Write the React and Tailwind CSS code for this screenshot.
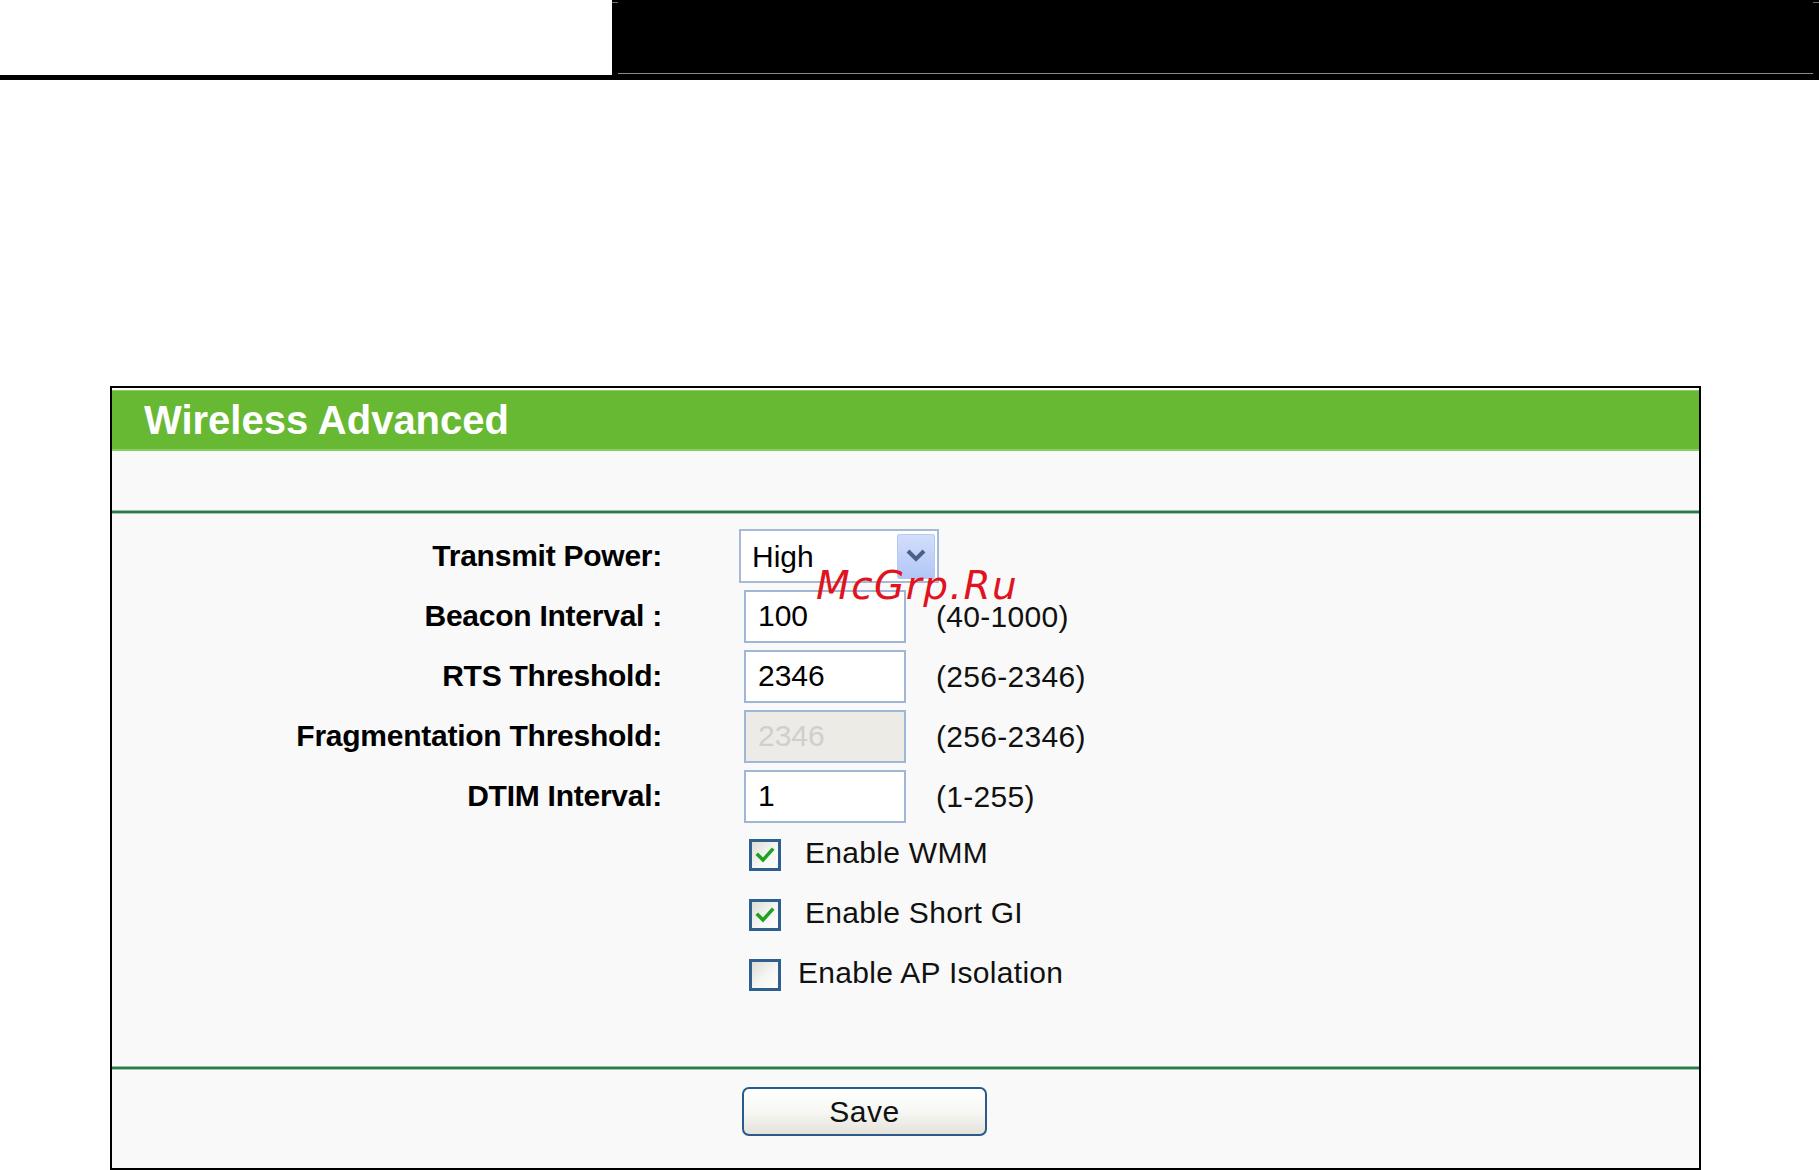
import React from 'react';

const font = "font-['Liberation_Sans',Arial,sans-serif]";

const Label = ({ children }) => (
  <div className="text-right text-[30px] font-bold text-black leading-none tracking-[-0.25px]">{children}</div>
);

const TextRow = ({ label, value, range, disabled }) => (
  <div className="grid grid-cols-[550px_1fr] gap-x-[77px] items-center h-[60px]">
    <Label>{label}</Label>
    <div className="flex items-center">
      <input
        readOnly
        disabled={disabled}
        defaultValue={value}
        className={
          'ml-[5px] w-[162px] h-[53px] border-2 border-[#9fb7d4] pl-[12px] text-[30px] outline-none ' +
          (disabled ? 'bg-[#ecebe5] text-[#cfcfcf]' : 'bg-white text-black')
        }
      />
      <span className="ml-[30px] text-[30px] text-[#111] tracking-[0.3px]">{range}</span>
    </div>
  </div>
);

const CheckRow = ({ label, checked, gap }) => (
  <div className="grid grid-cols-[550px_1fr] gap-x-[77px] items-center h-[60px]">
    <div />
    <div className="flex items-center">
      <div className="ml-[10px] w-[32px] h-[32px] border-[3px] border-[#2f5f8e] bg-gradient-to-br from-[#dcdcd6] via-[#f4f4f1] to-white flex items-center justify-center">
        {checked && (
          <svg width="20" height="18" viewBox="0 0 20 18">
            <path d="M3 9 L8 14 L17 4" fill="none" stroke="#21a121" strokeWidth="3.6" strokeLinecap="square" />
          </svg>
        )}
      </div>
      <span className={(gap ? gap : 'ml-[24px]') + ' mb-[5px] text-[30px] text-[#111] tracking-[0.3px]'}>{label}</span>
    </div>
  </div>
);

export default function App() {
  return (
    <div className={'relative w-[1819px] h-[1170px] bg-white overflow-hidden ' + font}>
      {/* top bar */}
      <div className="flex h-[75px]">
        <div className="w-[612px] bg-white" />
        <div className="flex-1 bg-black flex flex-col justify-between">
          <div className="flex justify-between pt-[2px]">
            <div className="w-[6px] h-px bg-gray-500" />
            <div className="w-[6px] h-px bg-gray-500" />
          </div>
          <div className="h-px bg-[#8a8a8a] mx-[6px] mb-px" />
        </div>
      </div>
      <div className="h-[5px] bg-black" />

      {/* panel */}
      <div className="mt-[306px] ml-[110px] w-[1591px] h-[784px] border-2 border-black bg-[#f9f9f9] flex flex-col">
        <div className="bg-white pt-[2px]">
          <div className="h-[61px] bg-[#67b833] border-t border-[#8ccc66] border-b-2 border-b-[#86cf5e] flex items-center pl-[32px]">
            <span className="text-[40px] font-bold text-white">Wireless Advanced</span>
          </div>
        </div>
        <div className="h-[59px] bg-[#f9f9f9]" />
        <div className="h-[4px] bg-[#2b7a4b] border-t border-[#8fc1a2] border-b border-b-[#9cc7ad]" />

        <div className="h-[552px] pt-[12px]">
          <div className="grid grid-cols-[550px_1fr] gap-x-[77px] items-center h-[60px]">
            <Label>Transmit Power:</Label>
            <div className="flex items-center">
              <div className="w-[200px] h-[54px] border-2 border-[#a4bad6] bg-white flex items-center justify-between pl-[11px] pr-[2px]">
                <span className="text-[30px] text-black">High</span>
                <div className="w-[38px] h-[45px] rounded-[2px] border border-[#b7c9f2] bg-gradient-to-b from-[#d2defc] to-[#b1c6f6] flex items-center justify-center">
                  <svg width="22" height="16" viewBox="0 0 22 16">
                    <path d="M3 3 L11 11 L19 3" fill="none" stroke="#4c5f86" strokeWidth="4" />
                  </svg>
                </div>
              </div>
            </div>
          </div>
          <TextRow label="Beacon Interval :" value="100" range="(40-1000)" />
          <TextRow label="RTS Threshold:" value="2346" range="(256-2346)" />
          <TextRow label="Fragmentation Threshold:" value="2346" range="(256-2346)" disabled />
          <TextRow label="DTIM Interval:" value="1" range="(1-255)" />
          <div className="-mt-[1px]">
            <CheckRow label="Enable WMM" checked />
            <CheckRow label="Enable Short GI" checked />
            <CheckRow label="Enable AP Isolation" gap="ml-[17px]" />
          </div>
        </div>

        <div className="h-[4px] bg-[#2b7a4b] border-t border-[#8fc1a2] border-b border-b-[#9cc7ad]" />
        <div className="flex-1 pt-[17px] grid grid-cols-[550px_1fr] gap-x-[77px] items-start">
          <div />
          <button className="ml-[3px] w-[245px] h-[49px] rounded-[7px] border-2 border-[#2a5a8c] bg-gradient-to-b from-white via-[#f7f7f4] to-[#e4e2d9] text-[30px] text-[#111] leading-none tracking-[0.5px]">
            Save
          </button>
        </div>
      </div>

      {/* watermark */}
      <div className="absolute left-[816px] top-[566px] text-[39px] italic text-[#e0141e] font-['DejaVu_Sans',sans-serif] tracking-[1.5px] leading-none">
        McGrp.Ru
      </div>
    </div>
  );
}
